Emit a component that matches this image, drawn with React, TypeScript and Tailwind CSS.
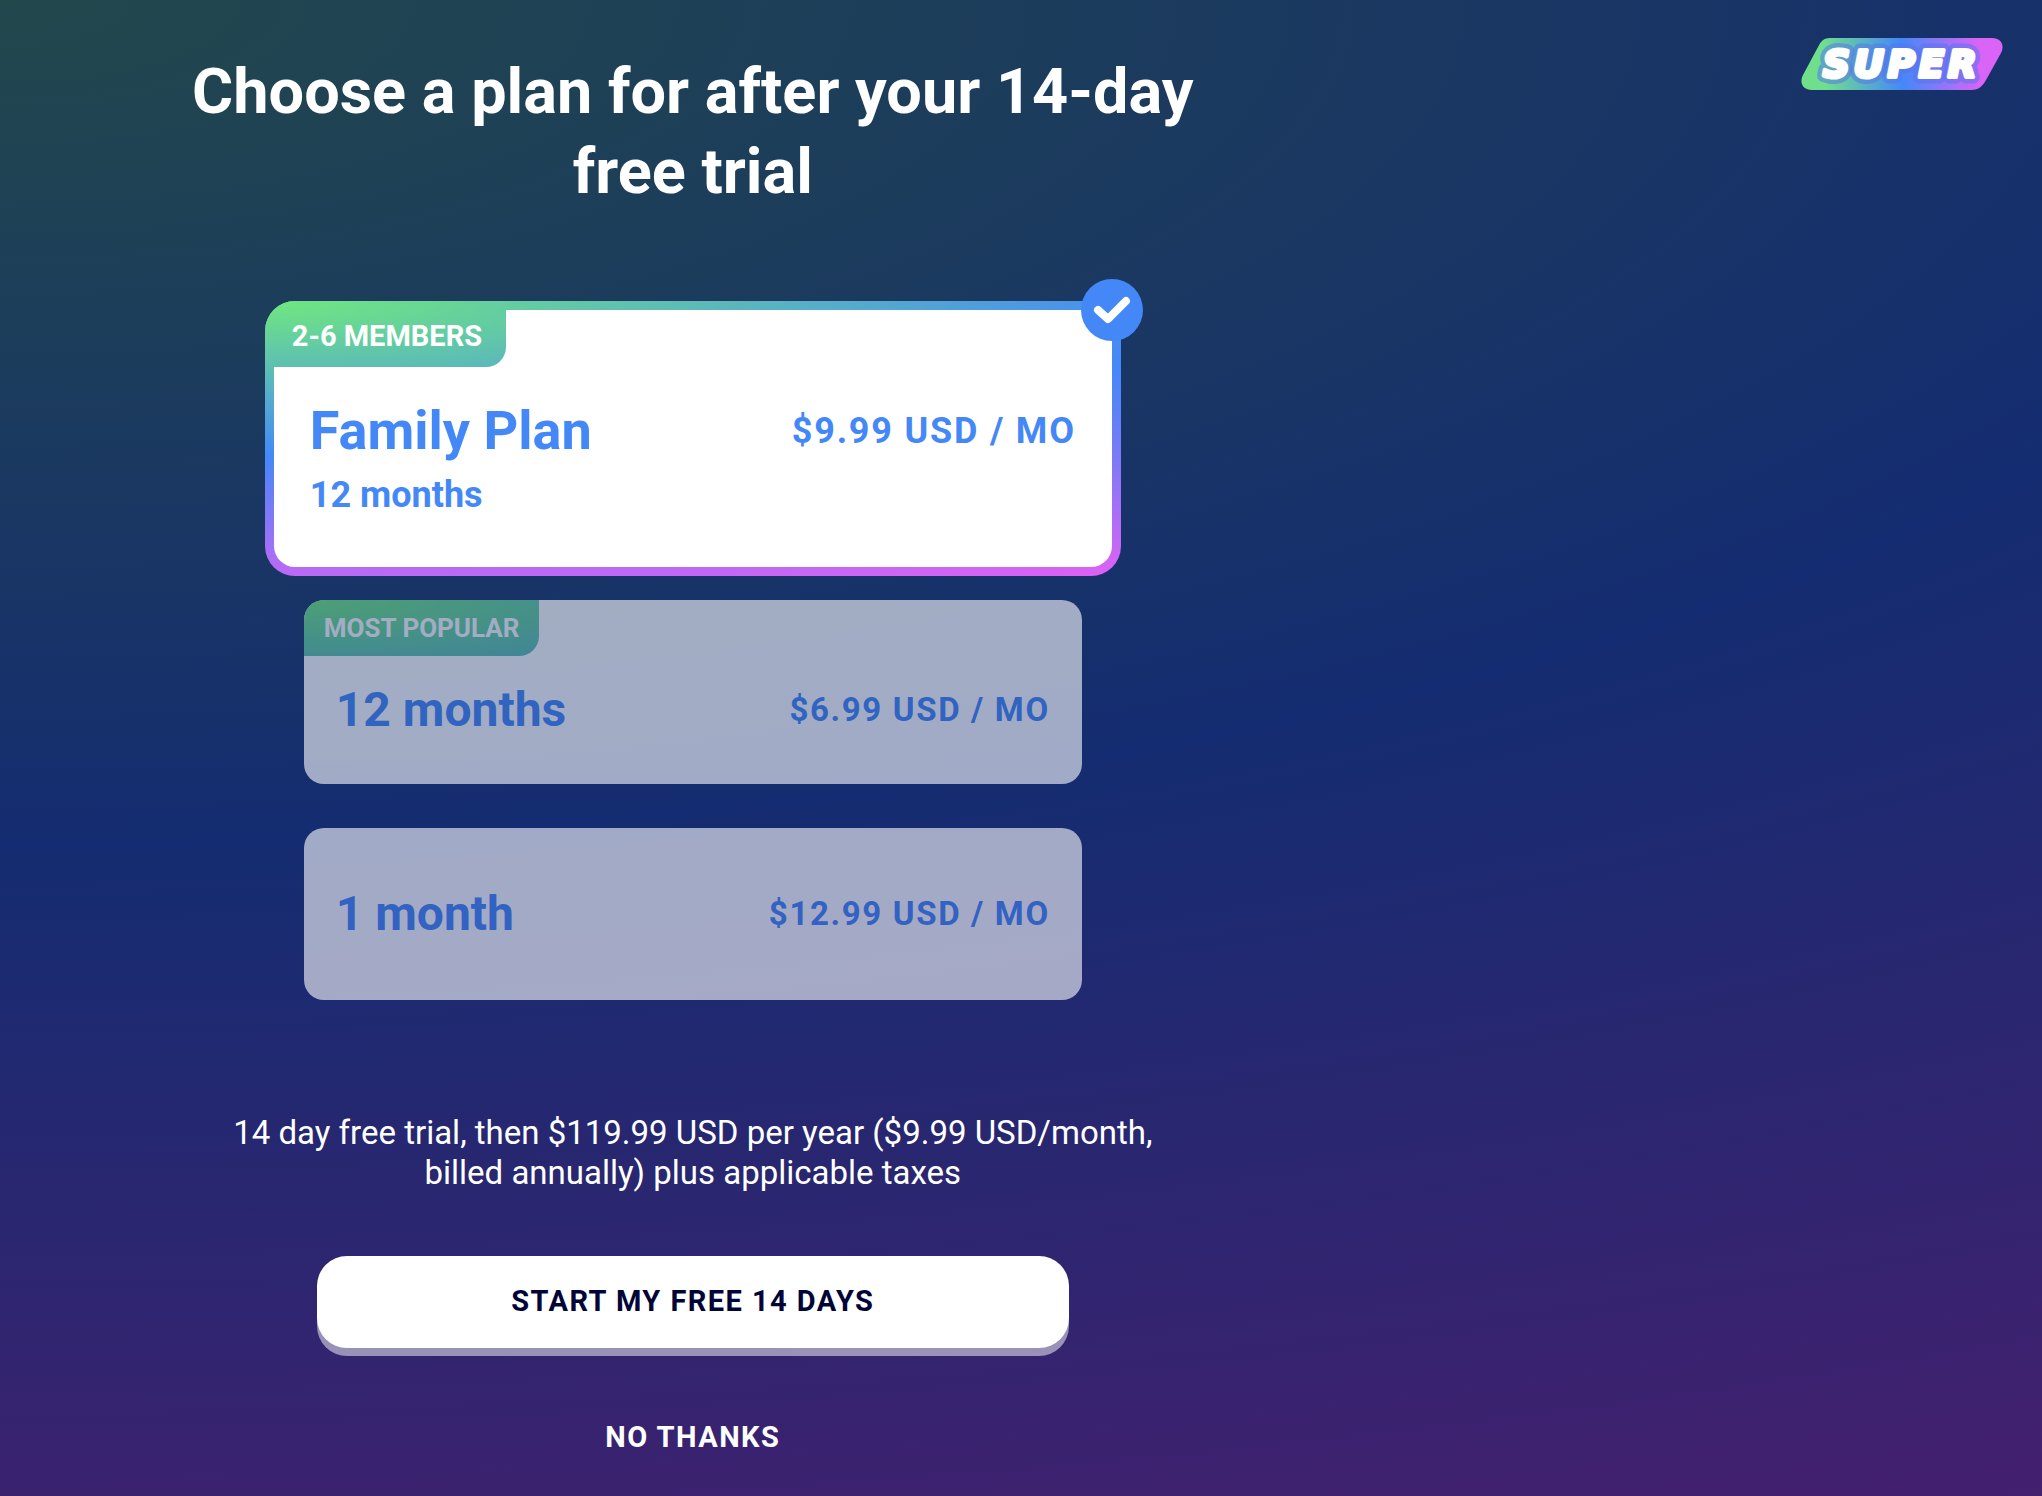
import { useState } from 'react';

const plans = [
  { id: 'family', name: 'Family Plan', detail: '12 months', tag: '2-6 MEMBERS', price: '$9.99 USD / MO' },
  { id: 'year', name: '12 months', tag: 'MOST POPULAR', price: '$6.99 USD / MO' },
  { id: 'month', name: '1 month', price: '$12.99 USD / MO' },
];

type Plan = (typeof plans)[number];

function SuperLogo() {
  return (
    <svg width="202" height="52" viewBox="0 0 202 52" role="img" aria-label="Super">
      <defs>
        <linearGradient id="super" gradientUnits="userSpaceOnUse" x1="4" y1="32" x2="198" y2="20">
          <stop offset="0.1" stopColor="#6fdf8c" />
          <stop offset="0.5" stopColor="#4488f8" />
          <stop offset="0.9" stopColor="#d964f6" />
        </linearGradient>
      </defs>
      <path
        d="M29 0H191C200 0 204 7 200 15L185 42C181 49 177 52 170 52H11C2 52 -2 45 2 37L17 9C20 3 23 0 29 0Z"
        fill="url(#super)"
      />
      {/* soft outline first, the white word on top of it */}
      <text
        x="22"
        y="39"
        className="font-['DejaVu_Sans'] text-[37px] font-bold tracking-[4px] italic"
        fill="none"
        stroke="#5575ee"
        strokeOpacity="0.55"
        strokeWidth="13"
        strokeLinejoin="round"
        aria-hidden="true"
      >
        SUPER
      </text>
      <text
        x="22"
        y="39"
        className="font-['DejaVu_Sans'] text-[37px] font-bold tracking-[4px] italic"
        fill="#fff"
        stroke="#fff"
        strokeWidth="4"
        strokeLinejoin="round"
      >
        SUPER
      </text>
    </svg>
  );
}

function CheckBadge() {
  return (
    <svg className="absolute -top-[22px] -right-[22px]" width="62" height="62" viewBox="0 0 62 62" aria-hidden="true">
      <circle cx="31" cy="31" r="31" fill="#4488f8" />
      <path d="M17 31L27 40L45 22" fill="none" stroke="#fff" strokeWidth="8" strokeLinecap="round" strokeLinejoin="round" />
    </svg>
  );
}

function SelectedPlan({ plan }: { plan: Plan }) {
  return (
    <div className="relative w-[856px] rounded-[30px] bg-[radial-gradient(217%_113%_at_0_0,#70e780,#4488f8_50%,#e160f5)] p-[9px]">
      <div className="flex h-[257px] flex-col rounded-[21px] bg-white">
        {plan.tag && (
          <span className="-mt-[9px] -ml-[9px] self-start rounded-tl-[30px] rounded-br-[20px] bg-[radial-gradient(1852px_312px_at_0_0,#70e780,#4488f8_50%,#e160f5)] pt-[15px] pr-6 pb-[11px] pl-[27px] text-[29px] leading-10 font-bold text-white">
            {plan.tag}
          </span>
        )}
        <div className="mt-8 flex items-start justify-between px-9 text-[#4488f8]">
          <div>
            <div className="text-[54px] leading-[64px] font-bold">{plan.name}</div>
            {plan.detail && <div className="mt-3 text-4xl leading-10 font-bold">{plan.detail}</div>}
          </div>
          <div className="text-4xl leading-[64px] font-bold tracking-wider">{plan.price}</div>
        </div>
      </div>
      <CheckBadge />
    </div>
  );
}

function IdlePlan({ plan }: { plan: Plan }) {
  return (
    <div className="w-[778px] rounded-[20px] bg-white opacity-60">
      {plan.tag && (
        <div className="flex">
          <span className="rounded-tl-[20px] rounded-br-[20px] bg-[radial-gradient(1852px_312px_at_0_0,#70e780,#4488f8_50%,#e160f5)] px-5 py-2 text-[26px] leading-10 font-bold text-white">
            {plan.tag}
          </span>
        </div>
      )}
      <div
        className={
          plan.tag
            ? 'flex items-center justify-between px-8 pt-[26px] pb-[46px] text-[#4488f8]'
            : 'flex items-center justify-between px-8 py-[58px] text-[#4488f8]'
        }
      >
        <span className="text-5xl leading-14 font-bold">{plan.name}</span>
        <span className="text-[33px] leading-14 font-bold tracking-wider">{plan.price}</span>
      </div>
    </div>
  );
}

export default function App() {
  const [selected, setSelected] = useState('family');

  return (
    <main className="grid min-h-screen grid-cols-[19fr_9fr] bg-[radial-gradient(240%_113%_at_0_0,#22484c,#142c71_50%,#461f6f)] font-['Roboto',sans-serif] text-white">
      <section className="flex flex-col items-center pt-[52px] pb-8">
        <h1 className="max-w-[1040px] text-center text-[63px] leading-20 font-bold">
          Choose a plan for after your 14-day free trial
        </h1>

        <fieldset className="mt-[89px] flex flex-col items-center" aria-label="Plan">
          {plans.map((plan, i) => (
            <label key={plan.id} className={i === 0 ? 'cursor-pointer' : i === 1 ? 'mt-6 cursor-pointer' : 'mt-11 cursor-pointer'}>
              <input
                type="radio"
                name="plan"
                value={plan.id}
                checked={selected === plan.id}
                onChange={() => setSelected(plan.id)}
                className="sr-only"
              />
              {selected === plan.id ? <SelectedPlan plan={plan} /> : <IdlePlan plan={plan} />}
            </label>
          ))}
        </fieldset>

        <p className="mt-[113px] max-w-[960px] text-center text-[33px] leading-10">
          14 day free trial, then $119.99 USD per year ($9.99 USD/month, billed annually) plus applicable taxes
        </p>

        <button
          type="button"
          className="mt-[63px] h-[92px] w-[752px] rounded-[30px] bg-white text-[29px] font-bold tracking-wider text-[#000437] shadow-[0_8px_0_rgba(255,255,255,0.5)]"
        >
          START MY FREE 14 DAYS
        </button>
        <button type="button" className="mt-[61px] px-8 py-1 text-[29px] leading-12 font-bold tracking-wider">
          NO THANKS
        </button>
      </section>

      <aside className="flex items-start justify-end pt-[38px] pr-[39px]">
        <SuperLogo />
      </aside>
    </main>
  );
}
